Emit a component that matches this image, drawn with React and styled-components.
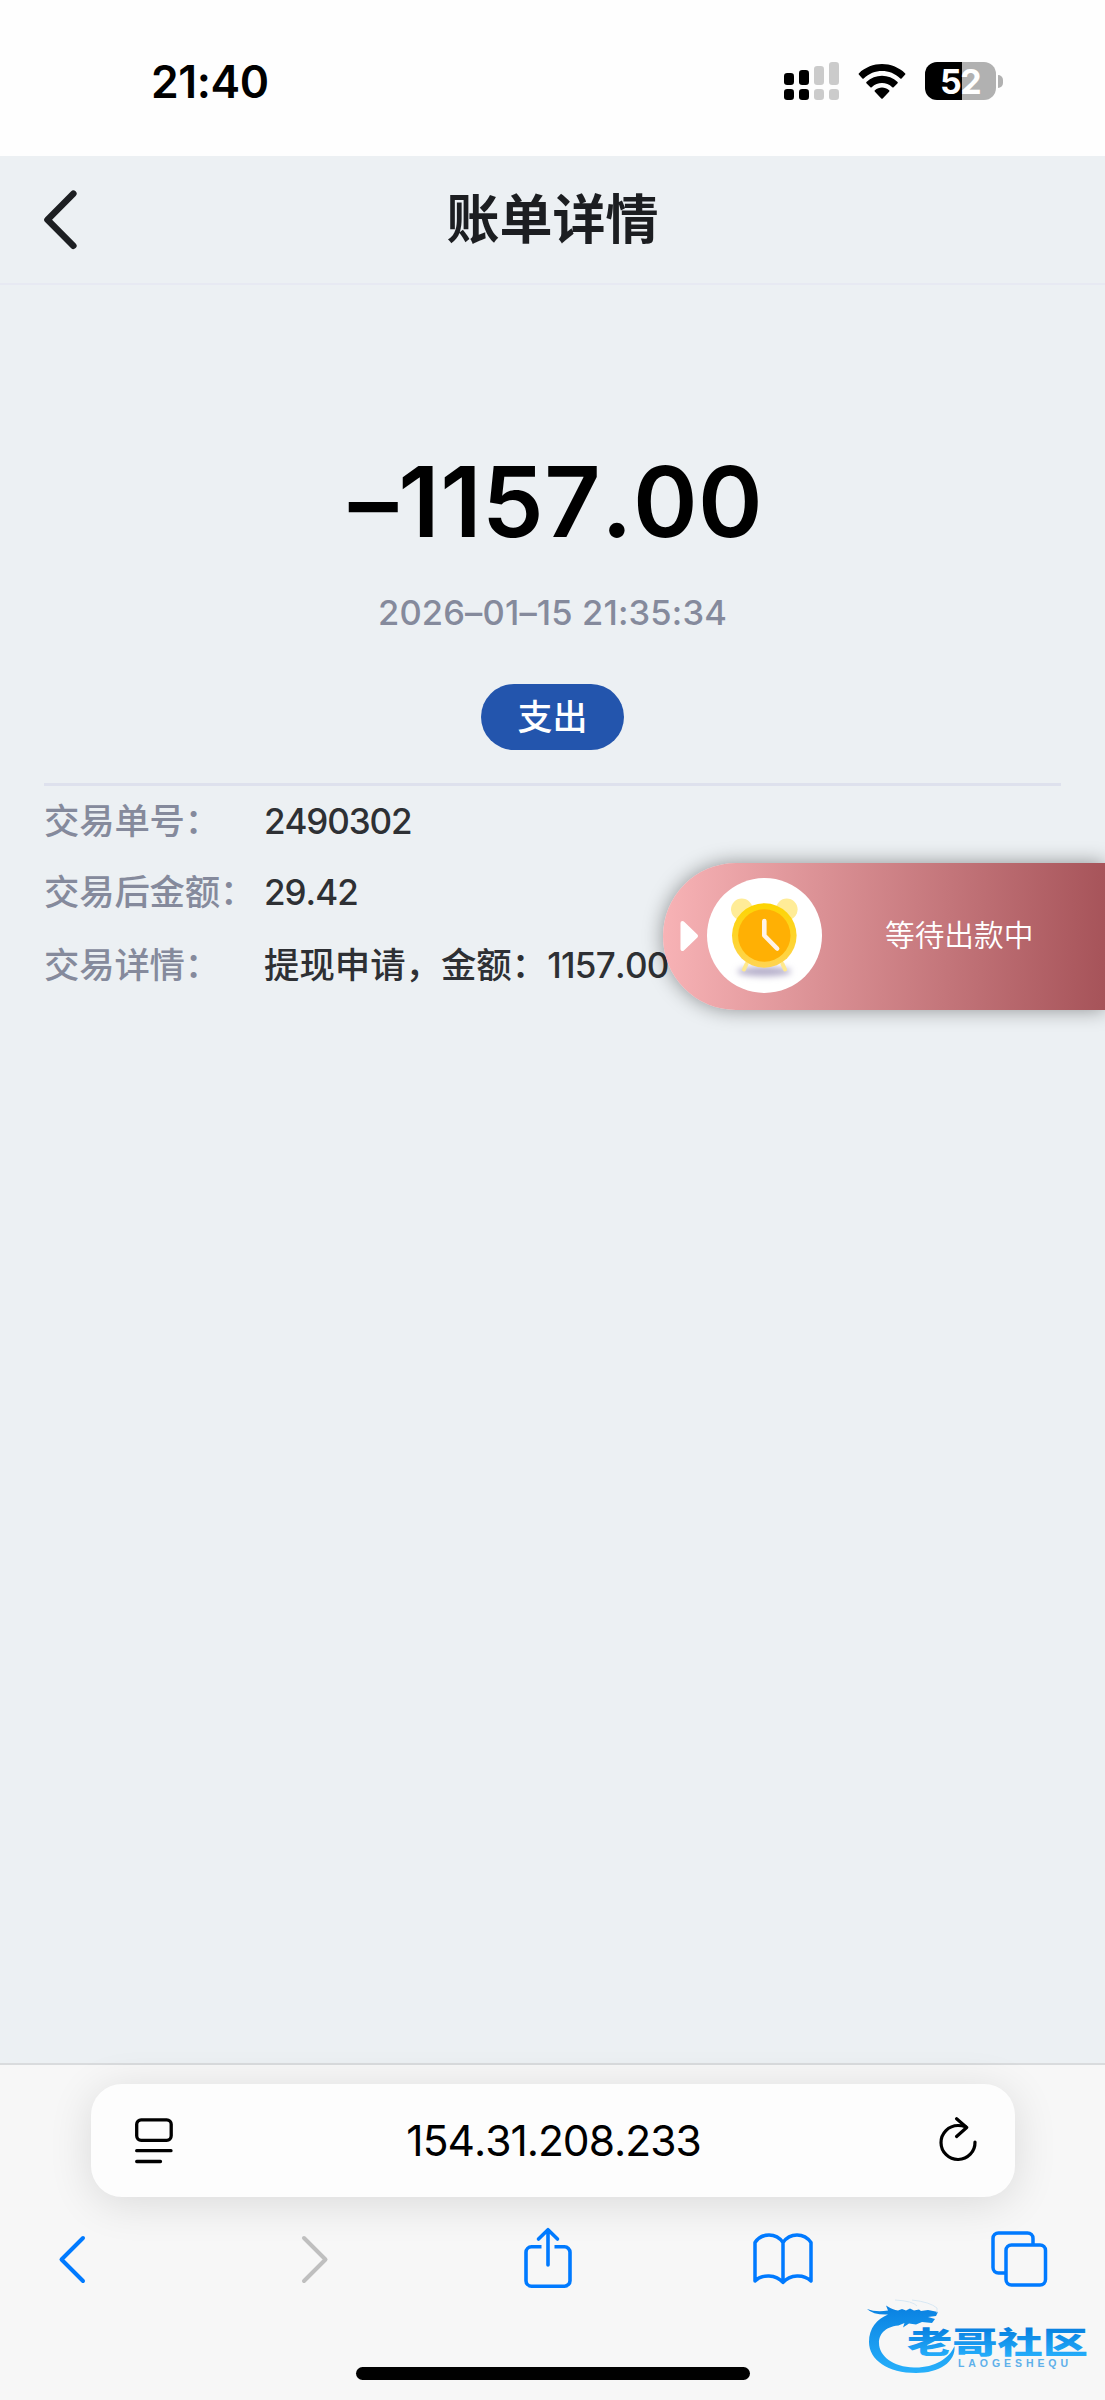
import React from 'react'
import styled, { createGlobalStyle } from 'styled-components'

const GlobalStyle = createGlobalStyle`
* { box-sizing: border-box; }
body { margin: 0; background: #ecf0f3; }
`;

const Screen = styled.div`width: 1105px;
height: 2400px;
display: flex;
flex-direction: column;
overflow: hidden;
background: #ecf0f3;
color: #000;
font-family: Inter, "Noto Sans CJK SC", sans-serif;
font-kerning: none;`;

const StatusBar = styled.div`height: 156px;
flex: none;
display: flex;
justify-content: space-between;
align-items: center;
background: #fefefe;
padding: 6px 102px 0 151px;`;
const Time = styled.span`font-size: 44.5px;
font-weight: 600;
padding-top: 1px;
letter-spacing: -0.4px;`;
const StatusIcons = styled.div`display: flex;
align-items: center;
gap: 19px;`;
const Battery = styled.div`display: flex;
align-items: center;
gap: 2px;`;
const BatteryBody = styled.div`width: 71px;
height: 38px;
border-radius: 12px;
display: flex;
align-items: center;
justify-content: center;
background: linear-gradient(90deg, #000 52%, #b1b1b1 52%);
color: #fff;
font-size: 34px;
font-weight: 700;
letter-spacing: -1.5px;
padding-right: 1px;`;
const BatteryNub = styled.div`width: 5px;
height: 13px;
border-radius: 0 6px 6px 0;
background: #b1b1b1;`;

const NavBar = styled.div`height: 129px;
flex: none;
display: grid;
grid-template-columns: 120px 1fr 120px;
align-items: center;
border-bottom: 2px solid #e7e9f2;`;
const BackBtn = styled.button`border: none;
background: none;
padding: 0 0 0 42px;
display: flex;`;
const Title = styled.h1`margin: 0;
text-align: center;
font-size: 53px;
line-height: 76px;
font-weight: 600;
color: #1c1e21;`;

const Summary = styled.section`height: 501px;
flex: none;
display: flex;
flex-direction: column;
align-items: center;
padding-top: 157px;
margin: 0 44px;
border-bottom: 3px solid #dee1ed;`;
const Amount = styled.div`padding-left: 7px;
font-size: 98px;
line-height: 120px;
font-weight: 600;
letter-spacing: 0.5px;`;
const DateText = styled.div`margin-top: 31px;
font-size: 34.5px;
line-height: 40px;
font-weight: 450;
letter-spacing: 0.15px;
color: #858a9c;`;
const Tag = styled.div`margin-top: 51px;
width: 143px;
height: 66px;
border-radius: 33px;
background: #2355ad;
color: #fff;
font-size: 35px;
line-height: 66px;
font-weight: 500;
text-align: center;`;

const Details = styled.dl`margin: 0;
padding: 0 44px;
flex: 1;`;
const Row = styled.div`display: flex;
height: ${(p) => p.$height}px;
line-height: 70px;
font-size: 35.4px;`;
const Label = styled.dt`width: 220px;
color: #858a9c;
font-weight: 500;
line-height: 71px;
white-space: nowrap;
letter-spacing: -0.2px;`;
const Value = styled.dd`margin: 0;
color: #2e3034;
font-weight: 500;
white-space: nowrap;`;
const Digits = styled.span`font-size: 35px;
letter-spacing: ${(p) => p.$spacing || -1}px;`;

const Floating = styled.div`position: absolute;
left: 663px;
top: 863px;
width: 442px;
height: 147px;
border-radius: 73px 0 0 73px;
background: linear-gradient(92deg, #f8b3b6, #a65359);
box-shadow: 0 0 20px rgba(0, 0, 0, 0.4);
display: flex;
align-items: center;
padding: 0 0 2px 17px;`;
const Arrow = styled.svg`flex: none;
margin-right: 8px;`;
const ClockDisc = styled.div`width: 115px;
height: 115px;
border-radius: 50%;
background: #fff;
margin-right: 63px;
flex: none;`;
const FloatingText = styled.span`color: #fff;
font-size: 29.7px;
line-height: 44px;
font-weight: 350;
padding-bottom: 2px;
white-space: nowrap;`;

const Browser = styled.footer`height: 337px;
flex: none;
position: relative;
display: flex;
flex-direction: column;
align-items: center;
background: #f7f7f7;
border-top: 2px solid #d9dbdd;
padding-top: 19px;`;
const AddressBar = styled.div`width: 924px;
height: 113px;
flex: none;
display: flex;
justify-content: space-between;
align-items: center;
padding: 0 36px 0 42px;
border-radius: 31px;
background: #fdfdfd;
box-shadow: 0 6px 44px rgba(0, 0, 0, 0.12);`;
const Url = styled.span`font-size: 42.5px;
line-height: 52px;
letter-spacing: -1px;
margin-right: 4px;`;
const Tools = styled.div`width: 100%;
height: 64px;
margin-top: 30px;
display: flex;
justify-content: space-between;
align-items: center;
padding: 0 56px 0 46px;`;
const HomeBar = styled.div`width: 394px;
height: 13px;
border-radius: 7px;
background: #000;
margin-top: 76px;`;
const Watermark = styled.svg`position: absolute;
right: 0;
bottom: 0;`;

const blue = '#007aff'

const rows = [
  { label: '交易单号：', value: <Digits $spacing={-1.1}>2490302</Digits>, height: 71 },
  { label: '交易后金额：', value: <Digits>29.42</Digits>, height: 73 },
  { label: '交易详情：', value: <>提现申请，金额：<Digits $spacing={-0.7}>1157.00</Digits></>, height: 70 },
]

const SignalIcon = () => (
  <svg width="55" height="38" viewBox="0 0 55 38">
    <rect x="0" y="11" width="10" height="12" rx="3.2" />
    <rect x="15" y="8" width="10" height="15" rx="3.2" />
    <g fill="#cbcbcb">
      <rect x="30" y="4" width="10" height="19" rx="3.2" />
      <rect x="45" y="0" width="10" height="23" rx="3.2" />
      <rect x="30" y="27" width="10" height="11" rx="3.2" />
      <rect x="45" y="27" width="10" height="11" rx="3.2" />
    </g>
    <rect x="0" y="27" width="10" height="11" rx="3.2" />
    <rect x="15" y="27" width="10" height="11" rx="3.2" />
  </svg>
)

const WifiIcon = () => (
  <svg width="48" height="36" viewBox="0 0 48 36">
    <path d="M0.800 11.600a1 1 0 0 1 0-1.200C14-2 34-2 47.200 10.400a1 1 0 0 1 0 1.200l-3.600 3.900a1 1 0 0 1-1.300 0C32 5.600 16 5.600 5.700 15.500a1 1 0 0 1-1.300 0z" />
    <path d="M8.400 20.200a1 1 0 0 1 0-1.200c8.900-8.400 22.300-8.400 31.200 0a1 1 0 0 1 0 1.200L35.600 24.200a1 1 0 0 1-1.300 0c-6-5.500-14.600-5.500-20.600 0a1 1 0 0 1-1.300 0z" />
    <path d="M16.900 28.700a1 1 0 0 1 0-1.400c4.200-3.600 10-3.600 14.200 0a1 1 0 0 1 0 1.400l-6.400 6.700a1 1 0 0 1-1.400 0z" />
  </svg>
)

const ClockIcon = () => (
  <svg width="115" height="115" viewBox="0 0 115 115">
    <defs>
      <linearGradient id="rim" x1="0" y1="0" x2="0" y2="1">
        <stop offset="0" stopColor="#fdd400" />
        <stop offset="1" stopColor="#ffd452" />
      </linearGradient>
      <filter id="soft" x="-30%" y="-100%" width="160%" height="300%">
        <feGaussianBlur stdDeviation="3" />
      </filter>
    </defs>
    <ellipse cx="57.300" cy="93.500" rx="27" ry="5" fill="#b5afca" filter="url(#soft)" />
    <circle cx="34.800" cy="31.300" r="10.800" fill="#ffec97" />
    <circle cx="79.800" cy="31.300" r="10.800" fill="#ffec97" />
    <path d="M39.500 86l-2.500 5.500M75.500 86l2.500 5.500" stroke="#ffe98e" strokeWidth="4" strokeLinecap="round" />
    <circle cx="57.300" cy="57.500" r="32.300" fill="url(#rim)" />
    <circle cx="57.300" cy="57.500" r="26.200" fill="#ffb004" />
    <path d="M57.300 43v14.500l12.800 13" fill="none" stroke="#fff3e8" strokeWidth="4.600" strokeLinecap="round" strokeLinejoin="round" />
  </svg>
)

const PageIcon = () => (
  <svg width="40" height="46" viewBox="0 0 40 46" fill="none" stroke="#000" strokeWidth="3.300" strokeLinecap="round">
    <rect x="3.700" y="1.800" width="34.500" height="20.500" rx="4.500" />
    <path d="M3.700 32.700H38M3.700 43.500H27.500" />
  </svg>
)

const ReloadIcon = () => (
  <svg width="40" height="48" viewBox="0 0 40 48" fill="none" stroke="#000" strokeWidth="3.200" strokeLinecap="round" strokeLinejoin="round">
    <path d="M37 25A17 17 0 1 1 20 8.500q4 0 7.500 1.300" />
    <path d="M18.600 1.800L28.700 10.500L18.600 19.500" />
  </svg>
)

// each toolbar icon sits in a 60px wide slot
const Chevron = ({ flip, color }) => (
  <svg width="60" height="50" viewBox="0 0 60 50">
    <path
      d={flip ? 'M22 4L43.500 25.500L22 47' : 'M37 4L15.500 25.500L37 47'}
      fill="none" stroke={color} strokeWidth="4" strokeLinecap="round" strokeLinejoin="round"
    />
  </svg>
)

const ShareIcon = () => (
  <svg width="60" height="64" viewBox="-5 0 60 64" fill="none" stroke={blue} strokeWidth="3.600" strokeLinecap="round" strokeLinejoin="round">
    <path strokeLinecap="butt" d="M18.500 19.800H8.500a5.500 5.500 0 0 0-5.500 5.500V53.700a5.500 5.500 0 0 0 5.500 5.500H41.500a5.500 5.500 0 0 0 5.500-5.500V25.300a5.500 5.500 0 0 0-5.500-5.500H31.500" />
    <path d="M25 38V2.700M15.500 12L25 2.700L34.500 12" />
  </svg>
)

const BookIcon = () => (
  <svg width="60" height="52" viewBox="0 0 60 52" fill="none" stroke={blue} strokeWidth="3.500" strokeLinejoin="round">
    <path d="M30 9.500C23-.500 9-.500 2 9.500V48C9 41 23 41 30 49.500C37 41 51 41 58 48V9.500C51-.500 37-.500 30 9.500zV49.500" />
  </svg>
)

const TabsIcon = () => (
  <svg width="60" height="58" viewBox="-1 0 60 58" fill="none" stroke={blue} strokeWidth="3.500">
    <path d="M43 14V8.500a5.500 5.500 0 0 0-5.500-5.500H8.500A5.500 5.500 0 0 0 3 8.500V37.500a5.500 5.500 0 0 0 5.500 5.500H15" />
    <rect x="16" y="15" width="39.500" height="40" rx="5.500" />
  </svg>
)

const Logo = () => (
  <Watermark width="255" height="110" viewBox="0 0 255 110">
    <defs>
      <linearGradient id="ring" gradientUnits="userSpaceOnUse" x1="0" y1="18" x2="0" y2="83">
        <stop offset="0" stopColor="#0a82e2" />
        <stop offset="1" stopColor="#27b0fb" />
      </linearGradient>
      <linearGradient id="word" gradientUnits="userSpaceOnUse" x1="0" y1="38" x2="0" y2="66">
        <stop offset="0" stopColor="#0880e0" />
        <stop offset="1" stopColor="#25adfa" />
      </linearGradient>
    </defs>
    <path
      fill="url(#ring)"
      d="M17 19q9 3.500 21 1.500l-2-5q7 4.500 12 5l4-1.500 4 1.500 4-2 4 2 5-1 2 1.500 7-1 10 2-2 4-8 1 7 2-3 4-10-1-6 2.500-7-1-6 4 1.500-4.500-6 2.500C34 37 29 45 29 53C29 66 43 77 64 77.500C84 78 99 69 104.500 56C106 72 89 83 66 83C38 83 19 70 19 52C19 38 27 29 38 24.500Q23 25 17 19z"
    />
    <path d="M45 10q18 1 22 6M62 10q18 2 25 8v5" fill="none" stroke="#cfe3f3" strokeWidth="0.800" />
    <text x="57" y="62.500" fontSize="30" fontWeight="900" fill="url(#word)" fontFamily="Noto Sans CJK SC, sans-serif" textLength="181" lengthAdjust="spacingAndGlyphs">老哥社区</text>
    <text x="108" y="77" fontSize="10.500" fontWeight="700" fill="#5fb0ea" fontFamily="Liberation Sans, sans-serif" textLength="110">LAOGESHEQU</text>
  </Watermark>
)

function App() {
  return (
    <Screen>
      <GlobalStyle />
      <StatusBar>
        <Time>21:40</Time>
        <StatusIcons>
          <SignalIcon />
          <WifiIcon />
          <Battery>
            <BatteryBody>52</BatteryBody>
            <BatteryNub />
          </Battery>
        </StatusIcons>
      </StatusBar>

      <NavBar>
        <BackBtn>
          <svg width="38" height="62" viewBox="0 0 38 62">
            <path d="M31.300 4.700L5.500 30.700L31.300 56.700" fill="none" stroke="#1d1f22" strokeWidth="6.600" strokeLinecap="round" strokeLinejoin="round" />
          </svg>
        </BackBtn>
        <Title>账单详情</Title>
      </NavBar>

      <Summary>
        <Amount>–1157.00</Amount>
        <DateText>2026–01–15 21:35:34</DateText>
        <Tag>支出</Tag>
      </Summary>

      <Details>
        {rows.map((row) => (
          <Row key={row.label} $height={row.height}>
            <Label>{row.label}</Label>
            <Value>{row.value}</Value>
          </Row>
        ))}
      </Details>

      <Floating>
        <Arrow width="19" height="32" viewBox="0 0 19 32">
          <path d="M2.500 3L16 16L2.500 29z" fill="#fff" stroke="#fff" strokeWidth="4" strokeLinejoin="round" />
        </Arrow>
        <ClockDisc><ClockIcon /></ClockDisc>
        <FloatingText>等待出款中</FloatingText>
      </Floating>

      <Browser>
        <AddressBar>
          <PageIcon />
          <Url>154.31.208.233</Url>
          <ReloadIcon />
        </AddressBar>
        <Tools>
          <Chevron color={blue} />
          <Chevron flip color="#bfbfbf" />
          <ShareIcon />
          <BookIcon />
          <TabsIcon />
        </Tools>
        <HomeBar />
        <Logo />
      </Browser>
    </Screen>
  )
}

export default App
